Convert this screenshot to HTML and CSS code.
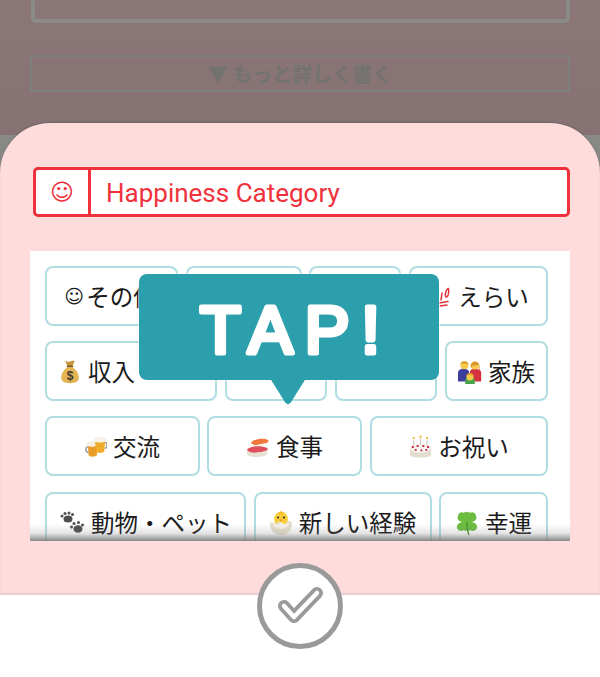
FILE: index.html
```html
<!DOCTYPE html>
<html lang="ja">
<head>
<meta charset="utf-8">
<title>Happiness Category</title>
<link rel="stylesheet" href="styles.css">
</head>
<body>
<div class="page">
  <div class="backdrop">
    <div class="backdrop-top">
      <div class="memo"></div>
      <div class="more">▼ もっと詳しく書く</div>
    </div>
  </div>
  <div class="sheet">
    <div class="field">
      <div class="field-icon">☺</div>
      <div class="field-label">Happiness Category</div>
    </div>
    <div class="panel">
      <div class="rows">
        <div class="row">
          <div class="chip w133 tight"><span class="smile">☺</span>その他</div>
          <div class="chip w116"></div>
          <div class="chip w92"></div>
          <div class="chip w139">
            <svg class="emo e100" viewBox="0 0 24 24"><path d="M14 8 13 15M20.500 3.500C18.500 4 17 8 17.500 11c.4 2 2.400 1 2.900-2 .4-2 .3-5-.4-5.500M11 18l9-1.500M12 21l7-1" fill="none" stroke="#e0333c" stroke-width="1.500" stroke-linecap="round"/></svg>えらい
          </div>
        </div>
        <div class="row">
          <div class="chip w172 start">
            <svg class="emo" viewBox="0 0 24 30"><path d="M6 1c3 1 4 2 6 1 3-1 4-1 6-1l-3 7H9z" fill="#c6953a"/><rect x="8" y="7" width="8" height="2.500" rx="1" fill="#7a5a22"/><path d="M9 9C3 13 1 18 1 22c0 5 4 7 11 7s11-2 11-7c0-4-2-9-8-13z" fill="#e2b452"/><text x="12" y="25" class="emo-dollar">$</text></svg>収入
          </div>
          <div class="chip w102"></div>
          <div class="chip w102"></div>
          <div class="chip w103">
            <svg class="emo family" viewBox="0 0 30 30"><path d="M0 27V16c0-3 3-5 7-5s7 2 7 5v11z" fill="#3d3e9c"/><path d="M15 27V15c0-3 3-4 6-4s8 1 8 5v11z" fill="#d4323f"/><circle cx="8" cy="6.500" r="5" fill="#f7cb4d"/><path d="M3 6c0-6 10-6 10 0-2-2-8-2-10 0z" fill="#d99a2b"/><circle cx="21" cy="7" r="5" fill="#f7cb4d"/><path d="M16 9c-1-9 11-9 11 0 1 2 1 3 0 4-1-3-1-6-2-7-3 1-6 1-7 1-1 2-1 4-2 2z" fill="#d9932a"/><path d="M9 30v-5c0-2 3-3 6-3s6 1 6 3v5z" fill="#49a34e"/><circle cx="15" cy="21" r="4.500" fill="#f7cb4d"/><path d="M10.500 20c0-5 9-5 9 0-2-1.500-7-1.500-9 0z" fill="#d99a2b"/></svg>家族
          </div>
        </div>
        <div class="row row-even">
          <div class="chip w155">
            <svg class="emo beer" viewBox="0 0 24 24"><path d="M3 12c-3 0-3 6 1 6" fill="none" stroke="#9a9a92" stroke-width="1.600"/><path d="M3 9l1 12c0 2 8 2 9 0l1-12z" fill="#e89d28"/><path d="M2 10c-1-3 2-4 4-3 2-2 6-1 7 0 2 0 2 3 0 4-3 1-9 1-11-1z" fill="#f4efe2"/><path d="M21 7c4-.5 4 6 .5 6.500" fill="none" stroke="#9a9a92" stroke-width="1.600"/><path d="M11 6l1 11c1 2 8 2 9 0l1-11z" fill="#f1ac2c"/><path d="M10 6c-1-3 2-5 4-4 2-2 6-1 7 0 3 0 3 3 1 4-3 1.500-9 1.500-12 0z" fill="#f6f2e6"/></svg>交流
          </div>
          <div class="chip w155">
            <svg class="emo sushi" viewBox="0 0 24 22"><path d="M5 7c3-5 14-5 17-3 2 2-2 4-6 4-4 1-8 2-11-1z" fill="#f0783c"/><path d="M4 9c5 1 12-1 15-2l1 2c-4 2-11 3-16 1z" fill="#f7f3ea"/><path d="M1 14c2-4 14-5 20-2 2 2 0 4-5 4-5 1-12 2-15-2z" fill="#e04e5c"/><path d="M1 15c3 3 14 2 20-1 2 5-2 7-10 7s-11-2-10-6z" fill="#e6e1d4"/></svg>食事
          </div>
          <div class="chip w178 push">
            <svg class="emo cake" viewBox="0 0 24 24"><path d="M1 14c0-7 22-7 22 0v6c0 4-22 4-22 0z" fill="#e2ddcf"/><ellipse cx="12" cy="13" rx="11" ry="5" fill="#f9f6ef"/><path d="M5 5v6M12 3v7M19 5v6" stroke="#d9d4c8" stroke-width="1.500"/><path d="M5 1.500v2.500M12 0v2.500M19 1.500v2.500" stroke="#f2b632" stroke-width="1.800"/><path d="M3 12h2M8 11h2M14 11h2M19 12h2M6 15h2M12 15.500h2M17 15h2" stroke="#c52248" stroke-width="2"/></svg>お祝い
          </div>
        </div>
        <div class="row">
          <div class="chip w201">
            <svg class="emo paws" viewBox="0 0 26 24"><g fill="#4e4e4e"><ellipse cx="9" cy="8" rx="4.500" ry="3.500"/><circle cx="3" cy="5" r="1.500"/><circle cx="6" cy="2.500" r="1.500"/><circle cx="10" cy="2" r="1.500"/><circle cx="13.500" cy="3.500" r="1.500"/><ellipse cx="19" cy="18" rx="4.500" ry="3.800"/><circle cx="12.500" cy="16" r="1.500"/><circle cx="15" cy="12.500" r="1.500"/><circle cx="19.500" cy="11.500" r="1.500"/><circle cx="23.500" cy="14" r="1.500"/></g></svg>動物・ペット
          </div>
          <div class="chip w178">
            <svg class="emo chick" viewBox="0 0 24 24"><circle cx="12" cy="8" r="7" fill="#f8cf3a"/><path d="M1 12c3-2 5 2 7 0s3-2 5 0 4 1 5-1 4-1 5 1c0 8-5 12-11 12S1 20 1 12z" fill="#e6dfcb"/><path d="M4 13c3 0 4 2 6 0s3-1 5 0 4-1 5-1c-1 4-4 6-8 6s-7-2-8-5z" fill="#f6f2e6"/><circle cx="9" cy="6.500" r="1.100" fill="#333"/><circle cx="15" cy="6.500" r="1.100" fill="#333"/><path d="M10 8.500h4l-2 2z" fill="#ef8f22"/><path d="M9 1.500l2 1 1-2 1 2 2-1" fill="none" stroke="#f8b52a" stroke-width="1.200"/></svg>新しい経験
          </div>
          <div class="chip w109">
            <svg class="emo clover" viewBox="0 0 24 26"><g fill="#6cbc3f"><path d="M12 12C6 13 1 10 3 6c0-3 4-5 6-3 2-3 5-1 3 9z"/><path d="M12 12C18 13 23 10 21 6c0-3-4-5-6-3-2-3-5-1-3 9z"/><path d="M12 12C6 11 1 14 2 18c1 3 5 4 7 2 1 2 5 2 3-8z"/><path d="M12 12c6-1 11 2 10 6-1 3-5 4-7 2-1 2-5 2-3-8z"/></g><path d="M12 12c0 5 0 9 2 13" fill="none" stroke="#4a9a34" stroke-width="1.500"/></svg>幸運
          </div>
        </div>
      </div>
      <div class="fade"></div>
    </div>
  </div>
  <div class="foot"></div>
  <div class="tap">
    <svg class="tap-art" viewBox="0 0 300 106"><text x="61" y="79" class="tap-text">TAP!</text></svg>
  </div>
  <div class="confirm">
    <svg class="confirm-check" viewBox="0 0 45 38"><path d="M6 19 16 30 39 6" fill="none" stroke="#9a9a9a" stroke-width="12" stroke-linecap="round" stroke-linejoin="round"/><path d="M6 19 16 30 39 6" fill="none" stroke="#fff" stroke-width="4.500" stroke-linecap="round" stroke-linejoin="round"/></svg>
  </div>
</div>
</body>
</html>
```
FILE: styles.css
```css
* { box-sizing: border-box; }
html, body { margin: 0; padding: 0; background: #fff; }
.page {
  position: relative;
  width: 600px;
  height: 677px;
  overflow: hidden;
  display: flex;
  flex-direction: column;
  font-family: "Noto Sans CJK JP", sans-serif;
}
.backdrop {
  height: 175px;
  margin-bottom: -52px;
  background: #888887;
}
.backdrop-top {
  height: 135px;
  padding: 0 30px;
  background: linear-gradient(#8b7777, #867272);
}
.memo {
  height: 23px;
  margin-left: 1px;
  border: 4px solid #8a8b87;
  border-top: 0;
  border-radius: 0 0 5px 5px;
}
.more {
  height: 37px;
  margin-top: 32px;
  border: 2px solid #7f807e;
  display: flex;
  align-items: center;
  justify-content: center;
  font-size: 20px;
  font-weight: 700;
  line-height: 1;
  color: #727370;
}
.sheet {
  position: relative;
  height: 472px;
  flex: none;
  padding: 44px 30px 0;
  background: #fedcdc;
  border-radius: 50px 50px 0 0;
  box-shadow: 0 -1px 2px rgba(0, 0, 0, .15), inset 0 -2px 2px rgba(0, 0, 0, .07);
}
.field {
  display: flex;
  height: 50px;
  margin-left: 3px;
  border: 3px solid #f0323c;
  border-radius: 5px;
  background: #fff;
  color: #f0323c;
}
.field-icon {
  width: 55px;
  border-right: 3px solid #f0323c;
  padding-top: 1px;
  display: flex;
  align-items: center;
  justify-content: center;
  font-family: "DejaVu Sans", sans-serif;
  font-size: 23px;
  line-height: 1;
}
.field-label {
  padding-left: 15px;
  font-family: Roboto, sans-serif;
  font-size: 26px;
  line-height: 46px;
}
.panel {
  position: relative;
  height: 290px;
  margin-top: 34px;
  padding: 15px 22px 0 15px;
  background: #fff;
  overflow: hidden;
}
.rows {
  display: flex;
  flex-direction: column;
  gap: 15px;
}
.row {
  display: flex;
  justify-content: space-between;
}
.row:last-child { margin-top: 1px; }
.row-even { justify-content: flex-start; gap: 7px; }
.push { margin-left: auto; }
.chip {
  height: 60px;
  flex: none;
  padding-top: 1px;
  display: flex;
  align-items: center;
  justify-content: center;
  gap: 6px;
  border: 2px solid #b0dde2;
  border-radius: 8px;
  background: #fff;
  color: #1a1a1a;
  font-size: 23.500px;
  line-height: 1;
  white-space: nowrap;
}
.tight { gap: 2px; padding-right: 2px; }
.start { justify-content: flex-start; padding-left: 12px; gap: 7px; }
.w92 { width: 92px; }
.w102 { width: 102px; }
.w103 { width: 103px; }
.w109 { width: 109px; }
.w116 { width: 116px; }
.w133 { width: 133px; }
.w139 { width: 139px; }
.w155 { width: 155px; }
.w172 { width: 172px; }
.w178 { width: 178px; }
.w201 { width: 201px; }
.smile {
  font-family: "DejaVu Sans", sans-serif;
  font-size: 19px;
}
.emo { width: 22px; height: 24px; flex: none; }
.e100 { width: 24px; }
.family { width: 24px; }
.beer { width: 22px; height: 22px; }
.sushi { width: 24px; }
.cake { width: 23px; }
.chick { width: 24px; height: 26px; }
.paws { width: 26px; height: 24px; }
.clover { width: 24px; height: 26px; }
.emo-dollar {
  font-family: "Liberation Sans", sans-serif;
  font-size: 15px;
  font-weight: 700;
  text-anchor: middle;
  fill: #3f3a34;
}
.fade {
  position: absolute;
  left: 0;
  right: 0;
  bottom: 0;
  height: 17px;
  background: linear-gradient(rgba(130, 130, 130, 0), rgba(130, 130, 130, .22) 55%, rgba(130, 130, 130, .95));
}
.foot { flex: 1; background: #fff; }
.tap {
  position: absolute;
  left: 139px;
  top: 274px;
  width: 300px;
  height: 106px;
  border-radius: 8px;
  background: #2b9fac;
  box-shadow: 0 0 0 1px rgba(255, 255, 255, .5);
}
.tap::after {
  content: "";
  position: absolute;
  left: 129px;
  top: 101px;
  width: 40px;
  height: 30px;
  background: #2b9fac;
  clip-path: polygon(0 0, 100% 0, 57% 92%, 50% 98%, 43% 92%);
}
.tap-art { display: block; width: 300px; height: 106px; }
.tap-text {
  font-family: "Liberation Sans", sans-serif;
  font-size: 67px;
  letter-spacing: 12px;
  fill: #fff;
  stroke: #fff;
  stroke-width: 5px;
  stroke-linejoin: round;
}
.confirm {
  position: absolute;
  left: 257px;
  top: 563px;
  width: 86px;
  height: 86px;
  border: 5px solid #9a9a9a;
  border-radius: 50%;
  background: #fff;
  display: flex;
  align-items: center;
  justify-content: center;
}
.confirm-check { width: 45px; height: 38px; }
```
